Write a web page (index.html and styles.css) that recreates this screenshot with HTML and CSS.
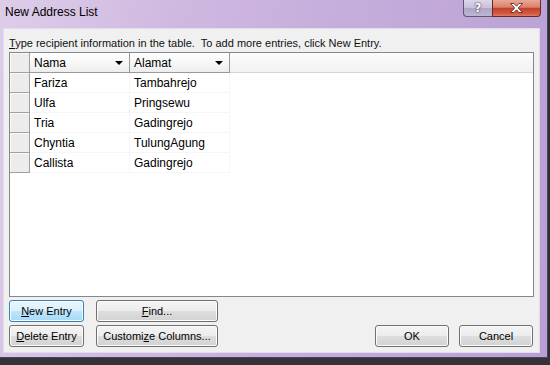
FILE: index.html
```html
<!DOCTYPE html>
<html>
<head>
<title>New Address List</title>
<link rel="stylesheet" href="styles.css">
</head>
<body>
<div class="window">
    <div class="titlebar">
        <span class="title">New Address List</span>
        <div class="caption-btns">
            <span class="cap help">?</span>
            <span class="cap close">
                <svg width="13" height="10" viewBox="0 0 13 10">
                    <path d="M0.5 0.5 H4 L6.5 3.2 L9 0.5 H12.5 L8.3 5 L12.5 9.5 H9 L6.5 6.8 L4 9.5 H0.5 L4.7 5 Z" fill="#fff" stroke="#6a2a22" stroke-width="0.9"/>
                </svg>
            </span>
        </div>
    </div>
    <div class="client">
        <p class="hint"><u>T</u>ype recipient information in the table.&nbsp; To add more entries, click New Entry.</p>
        <div class="grid-box">
            <table class="grid">
                <colgroup><col class="c-sel"><col class="c-col"><col class="c-col"><col></colgroup>
                <thead>
                    <tr>
                        <th class="sel"></th>
                        <th>Nama<span class="arrow"></span></th>
                        <th>Alamat<span class="arrow"></span></th>
                        <th class="fill"></th>
                    </tr>
                </thead>
                <tbody>
                    <tr><td class="sel"></td><td>Fariza</td><td>Tambahrejo</td><td class="fill"></td></tr>
                    <tr><td class="sel"></td><td>Ulfa</td><td>Pringsewu</td><td class="fill"></td></tr>
                    <tr><td class="sel"></td><td>Tria</td><td>Gadingrejo</td><td class="fill"></td></tr>
                    <tr><td class="sel"></td><td>Chyntia</td><td>TulungAgung</td><td class="fill"></td></tr>
                    <tr><td class="sel"></td><td>Callista</td><td>Gadingrejo</td><td class="fill"></td></tr>
                </tbody>
            </table>
        </div>
        <div class="actions">
            <div class="left-btns">
                <button class="btn hot" type="button"><u>N</u>ew Entry</button>
                <button class="btn" type="button"><u>F</u>ind...</button>
                <button class="btn" type="button"><u>D</u>elete Entry</button>
                <button class="btn" type="button">Customi<u>z</u>e Columns...</button>
            </div>
            <div class="right-btns">
                <button class="btn" type="button">OK</button>
                <button class="btn" type="button">Cancel</button>
            </div>
        </div>
    </div>
</div>
<div class="desktop"></div>
</body>
</html>
```

FILE: styles.css
```css
body
{
    margin: 0;
    width: 550px;
    height: 365px;
    overflow: hidden;
    background: #2f2f33;
    font-family: "Liberation Sans", Arial, sans-serif;
    font-size: 11px;
    color: #000;
}
.window
{
    box-sizing: border-box;
    width: 548px;
    height: 358px;
    padding: 0 7px 4px 3px;
    border-right: 1px solid #4a4060;
    border-bottom: 1px solid #4a4060;
    background: linear-gradient(100deg, #ddcde9 0%, #cfb8e0 30%, #c4acdb 60%, #b9a0d4 100%);
    display: flex;
    flex-direction: column;
}
.titlebar
{
    height: 28px;
    display: flex;
    align-items: flex-start;
}
.title
{
    font-size: 12px;
    line-height: 15px;
    padding: 5px 0 0 2px;
    color: #000;
}
.caption-btns
{
    margin-left: auto;
    margin-right: -1px;
    display: flex;
}
.cap
{
    box-sizing: border-box;
    height: 17px;
    display: flex;
    align-items: center;
    justify-content: center;
    border: 1px solid #5e5670;
    border-top: none;
}
.help
{
    width: 29px;
    border-right: none;
    border-radius: 0 0 0 4px;
    background: linear-gradient(#dcd6e8 0%, #c8c1d9 50%, #aea6c4 51%, #bdb6d2 100%);
    color: #fff;
    font: bold 12px "DejaVu Sans", sans-serif;
    text-shadow: 0 0 2px #3c3652, 0 0 1px #3c3652;
}
.close
{
    width: 49px;
    border-color: #6b2a22;
    border-radius: 0 0 4px 0;
    background: linear-gradient(#e9a896 0%, #d9826d 45%, #c4402b 52%, #d25a43 85%, #e07a5f 100%);
}
.client
{
    flex: 1;
    box-sizing: border-box;
    border: 1px solid #e4dcee;
    background: #f0f0f0;
    padding: 0 5px 5px 5px;
    display: flex;
    flex-direction: column;
}
.hint
{
    margin: 0 0 2px 0;
    padding-top: 8px;
    line-height: 13px;
    white-space: nowrap;
    color: #111;
}
.grid-box
{
    box-sizing: border-box;
    height: 245px;
    border: 1px solid #828790;
    background: #fff;
    overflow: hidden;
}
.grid
{
    width: 523px;
    table-layout: fixed;
    border-collapse: separate;
    border-spacing: 0;
    font-size: 12px;
}
.c-sel
{
    width: 20px;
}
.c-col
{
    width: 100px;
}
.grid th,
.grid td
{
    box-sizing: border-box;
    height: 20px;
    padding: 0 0 0 4px;
    text-align: left;
    font-weight: normal;
    white-space: nowrap;
}
.grid th
{
    position: relative;
    background: linear-gradient(#ffffff 0%, #f7f7f7 50%, #ededed 100%);
    border-right: 1px solid #9a9a9a;
    border-bottom: 1px solid #9a9a9a;
}
.grid th.fill
{
    border-right: none;
    border-bottom: 1px solid #d5d5d5;
    background: linear-gradient(#fbfbfb 0%, #f2f2f2 100%);
}
.grid td
{
    border-right: 1px solid #f6f6f6;
    border-bottom: 1px solid #f6f6f6;
}
.grid td.fill
{
    border: none;
}
.grid .sel
{
    padding: 0;
    background: #ececec;
    border-right: 1px solid #a0a0a0;
    border-bottom: 1px solid #a0a0a0;
    box-shadow: inset 1px 1px #fafafa;
}
.arrow
{
    position: absolute;
    right: 6px;
    top: 8px;
    border-left: 4px solid transparent;
    border-right: 4px solid transparent;
    border-top: 4px solid #000;
}
.actions
{
    margin-top: 3px;
    display: flex;
    justify-content: space-between;
    align-items: flex-end;
}
.left-btns
{
    display: grid;
    grid-template-columns: 75px 122px;
    column-gap: 12px;
    row-gap: 3px;
}
.right-btns
{
    display: flex;
    gap: 10px;
    margin-right: 1px;
}
.btn
{
    box-sizing: border-box;
    height: 22px;
    padding: 0;
    font-family: "Liberation Sans", Arial, sans-serif;
    font-size: 11px;
    color: #000;
    border: 1px solid #707070;
    border-radius: 3px;
    background: linear-gradient(#f4f4f4 0%, #ececec 50%, #dedede 50%, #d2d2d2 100%);
    box-shadow: inset 0 0 0 1px #fbfbfb;
}
.right-btns .btn
{
    width: 74px;
}
.btn.hot
{
    border-color: #3c7fb1;
    background: linear-gradient(#eaf6fd 0%, #d9f0fc 50%, #bee6fd 50%, #a7d9f5 100%);
    box-shadow: inset 0 0 0 1px #f4fbff;
}
.desktop
{
    height: 7px;
    background: #333338;
}
```
